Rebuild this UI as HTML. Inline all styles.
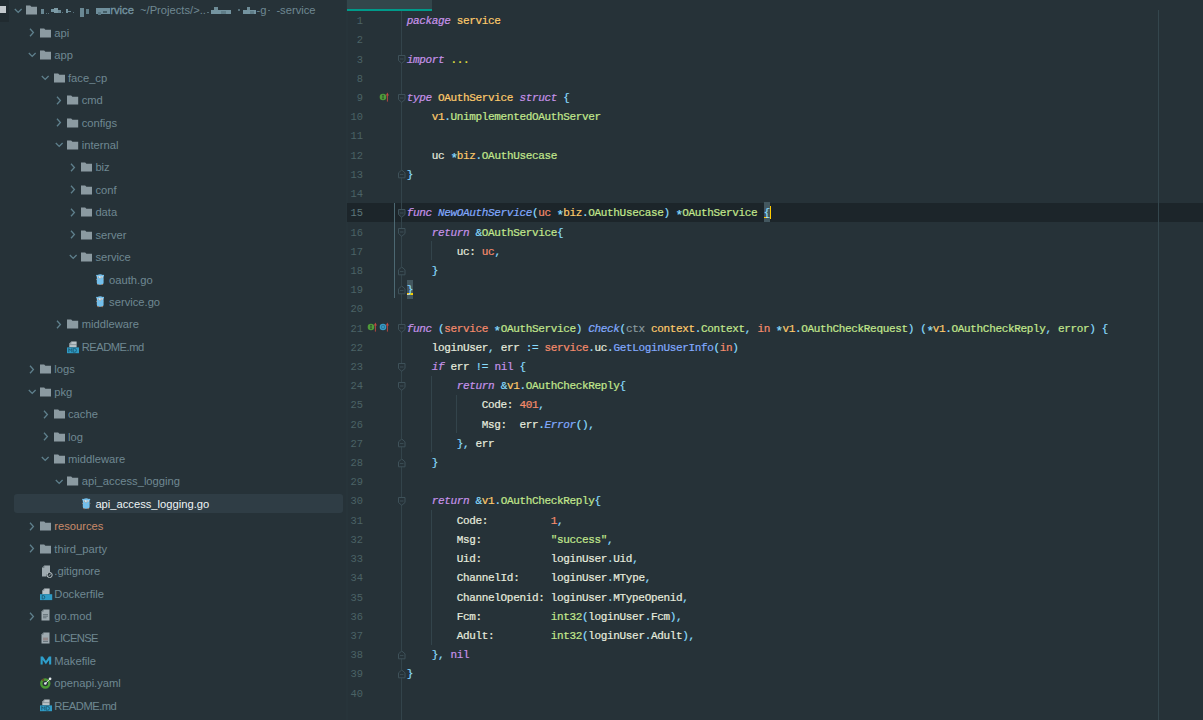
<!DOCTYPE html>
<html><head><meta charset="utf-8"><style>
*{margin:0;padding:0;box-sizing:border-box}
html,body{width:1203px;height:720px;overflow:hidden;background:#263238}
body{position:relative;font-family:"Liberation Sans",sans-serif}
.abs{position:absolute;line-height:0}
.ic,.chev{display:block}
.sbt{position:absolute;white-space:pre;font-size:11.2px;line-height:22.43px;height:22.43px;color:#6f8892}
.sbt.sel{color:#eef4f5}
.sbt.res{color:#c98a6a}
.root b{font-weight:normal;color:#7393a0;-webkit-text-stroke:0.35px}
.blk{position:absolute}
.root .blur{color:#6f8f9c;letter-spacing:-0.5px}
.root .path{color:#7f939c}
.selrow{position:absolute;left:14.2px;width:329px;height:19.4px;border-radius:3px;background:#2f3d45}
#topleft{position:absolute;left:0;top:0;width:9px;height:21.5px;background:#212b30}
#tlf{position:absolute;left:0;top:5.5px;width:6px;height:7.5px;background:#c3c8cc}
#tlf2{position:absolute;left:0;top:5.2px;width:1.8px;height:1px;background:#c3c8cc}
#divider{position:absolute;left:345.8px;top:0;width:2.2px;height:720px;background:#27343a}
#tab{position:absolute;left:347px;top:0;width:85px;height:9.2px;background:#33464b}
#tabline{position:absolute;left:347px;top:9.2px;width:85px;height:2px;background:#009a8a}
.ln{position:absolute;left:406.7px;white-space:pre;font-family:"Liberation Mono",monospace;font-size:11.0px;letter-spacing:-0.340px;line-height:19.21px;height:19.21px;color:#e6ecdf;-webkit-text-stroke:0.2px}
.ast{display:inline-block;transform:translateY(2.6px) scale(1.15)}
.num{position:absolute;left:340px;width:23.0px;text-align:right;font-family:"Liberation Mono",monospace;font-size:10.4px;letter-spacing:0.02px;line-height:19.21px;height:19.21px;color:#4b6366}
.k{color:#c792ea;font-style:italic}
.kn{color:#c792ea}
.y{color:#ffcb6b}
.g{color:#c3e88d}
.c{color:#89ddff}
.w{color:#e6ecdf}
.o{color:#f78c6c}
.b{color:#82aaff}
.bi{color:#82aaff;font-style:italic}
.gr{color:#8a9a9f}
.dots{color:#e6e23e}
.num.cur{color:#5d777b}
#curline{position:absolute;left:347px;width:856px;top:202.70px;height:19.21px;background:#1c252a}
#gutline{position:absolute;left:401.2px;top:11px;width:1px;height:709px;background:#33444b}
#scope{position:absolute;left:393.8px;top:202.70px;width:1.3px;height:95.55px;background:#4c6872}
#margin{position:absolute;left:1158px;top:10px;width:1px;height:710px;background:#34464d}
.guide{position:absolute;width:1px}
#bracebox{position:absolute;left:763.52px;top:202.20px;width:6.26px;height:19.71px;background:#43575f}
#bracebox2{position:absolute;left:406.70px;top:279.54px;width:6.26px;height:19.21px;background:#43575f}
#caret{position:absolute;left:769.78px;top:205.90px;width:1.3px;height:13.4px;background:#ffcc00}
.ul{position:absolute;height:1.2px;background:#ffcc00}
</style></head><body>
<div id="topleft"></div><div id="tlf"></div>
<div class="abs" style="left:14.00px;top:7.54px"><svg class="chev" width="9" height="6" viewBox="0 0 9 6"><path d="M0.8 1L4.2 4.4 7.6 1" fill="none" stroke="#5f808d" stroke-width="1.3"/></svg></div>
<div class="abs" style="left:26.30px;top:5.44px"><svg class="ic" width="11.2" height="10" viewBox="0 0 11.2 10"><path d="M0 0.5h4.2l1.2 1.3H11.2V9.5H0z" fill="#8b9aa1"/></svg></div>
<div class="blk" style="left:41.2px;top:9.3px;width:3.3px;height:4.4px;background:#6a8894"></div>
<div class="blk" style="left:45.5px;top:12.6px;width:1.2px;height:1.2px;background:#55707a"></div>
<div class="blk" style="left:48.3px;top:12.6px;width:1.2px;height:1.2px;background:#55707a"></div>
<div class="blk" style="left:51px;top:8.6px;width:3px;height:3.2px;background:#7494a0"></div>
<div class="blk" style="left:54px;top:8.3px;width:4.2px;height:4.8px;background:#7d9ba6"></div>
<div class="blk" style="left:58.2px;top:10px;width:2.8px;height:3px;background:#6d8b96"></div>
<div class="blk" style="left:61.5px;top:12.3px;width:1.2px;height:1.2px;background:#55707a"></div>
<div class="blk" style="left:65.5px;top:9.2px;width:2.5px;height:3.8px;background:#7494a0"></div>
<div class="blk" style="left:68.2px;top:11px;width:2.8px;height:1.2px;background:#6d8b96"></div>
<div class="blk" style="left:72.5px;top:12.3px;width:1.2px;height:1.2px;background:#55707a"></div>
<div class="blk" style="left:80px;top:7.6px;width:3.6px;height:9.2px;background:#6a8894"></div>
<div class="blk" style="left:86px;top:9px;width:3px;height:4.6px;background:#5f7d88"></div>
<div class="blk" style="left:96px;top:8.2px;width:14px;height:6.3px;background:#6f8f9c"></div>
<div class="blk" style="left:98px;top:11.5px;width:3px;height:3px;background:#5a7884"></div>
<div class="blk" style="left:103px;top:10.5px;width:4px;height:2.5px;background:#445d66"></div>
<div class="blk" style="left:207px;top:11.5px;width:1.5px;height:1.5px;background:#55707a"></div>
<div class="blk" style="left:211px;top:9.5px;width:20px;height:4.8px;background:#7494a0"></div>
<div class="blk" style="left:214px;top:7.4px;width:4px;height:2.2px;background:#6d8b96"></div>
<div class="blk" style="left:221px;top:10.5px;width:5px;height:3.5px;background:#5f7d88"></div>
<div class="blk" style="left:238px;top:9.3px;width:2.2px;height:2.2px;background:#55707a"></div>
<div class="blk" style="left:243px;top:9.5px;width:13px;height:4.8px;background:#7494a0"></div>
<div class="blk" style="left:246.5px;top:7.4px;width:3.5px;height:2.2px;background:#6d8b96"></div>
<div class="blk" style="left:250px;top:11px;width:4px;height:3px;background:#5f7d88"></div>
<div class="blk" style="left:268px;top:9.5px;width:2px;height:1.4px;background:#55707a"></div>
<div class="sbt root" style="left:110.3px;top:-0.96px"><b>rvice</b></div>
<div class="sbt" style="left:140px;top:-0.96px">~/Projects/&gt;..</div>
<div class="sbt" style="left:256.5px;top:-0.96px">-g</div>
<div class="sbt" style="left:276.4px;top:-0.96px">-service</div>
<div class="abs" style="left:29.00px;top:28.47px"><svg class="chev" width="6" height="9" viewBox="0 0 6 9"><path d="M1 0.8L4.4 4.5 1 8.2" fill="none" stroke="#5f808d" stroke-width="1.3"/></svg></div>
<div class="abs" style="left:40.00px;top:27.87px"><svg class="ic" width="11.2" height="10" viewBox="0 0 11.2 10"><path d="M0 0.5h4.2l1.2 1.3H11.2V9.5H0z" fill="#8b9aa1"/></svg></div>
<div class="sbt " style="left:54.30px;top:21.87px">api</div>
<div class="abs" style="left:27.70px;top:52.40px"><svg class="chev" width="9" height="6" viewBox="0 0 9 6"><path d="M0.8 1L4.2 4.4 7.6 1" fill="none" stroke="#5f808d" stroke-width="1.3"/></svg></div>
<div class="abs" style="left:40.00px;top:50.30px"><svg class="ic" width="11.2" height="10" viewBox="0 0 11.2 10"><path d="M0 0.5h4.2l1.2 1.3H11.2V9.5H0z" fill="#8b9aa1"/></svg></div>
<div class="sbt " style="left:54.30px;top:44.30px">app</div>
<div class="abs" style="left:41.40px;top:74.83px"><svg class="chev" width="9" height="6" viewBox="0 0 9 6"><path d="M0.8 1L4.2 4.4 7.6 1" fill="none" stroke="#5f808d" stroke-width="1.3"/></svg></div>
<div class="abs" style="left:53.70px;top:72.73px"><svg class="ic" width="11.2" height="10" viewBox="0 0 11.2 10"><path d="M0 0.5h4.2l1.2 1.3H11.2V9.5H0z" fill="#8b9aa1"/></svg></div>
<div class="sbt " style="left:68.00px;top:66.73px">face_cp</div>
<div class="abs" style="left:56.40px;top:95.76px"><svg class="chev" width="6" height="9" viewBox="0 0 6 9"><path d="M1 0.8L4.4 4.5 1 8.2" fill="none" stroke="#5f808d" stroke-width="1.3"/></svg></div>
<div class="abs" style="left:67.40px;top:95.16px"><svg class="ic" width="11.2" height="10" viewBox="0 0 11.2 10"><path d="M0 0.5h4.2l1.2 1.3H11.2V9.5H0z" fill="#8b9aa1"/></svg></div>
<div class="sbt " style="left:81.70px;top:89.16px">cmd</div>
<div class="abs" style="left:56.40px;top:118.19px"><svg class="chev" width="6" height="9" viewBox="0 0 6 9"><path d="M1 0.8L4.4 4.5 1 8.2" fill="none" stroke="#5f808d" stroke-width="1.3"/></svg></div>
<div class="abs" style="left:67.40px;top:117.59px"><svg class="ic" width="11.2" height="10" viewBox="0 0 11.2 10"><path d="M0 0.5h4.2l1.2 1.3H11.2V9.5H0z" fill="#8b9aa1"/></svg></div>
<div class="sbt " style="left:81.70px;top:111.59px">configs</div>
<div class="abs" style="left:55.10px;top:142.12px"><svg class="chev" width="9" height="6" viewBox="0 0 9 6"><path d="M0.8 1L4.2 4.4 7.6 1" fill="none" stroke="#5f808d" stroke-width="1.3"/></svg></div>
<div class="abs" style="left:67.40px;top:140.02px"><svg class="ic" width="11.2" height="10" viewBox="0 0 11.2 10"><path d="M0 0.5h4.2l1.2 1.3H11.2V9.5H0z" fill="#8b9aa1"/></svg></div>
<div class="sbt " style="left:81.70px;top:134.02px">internal</div>
<div class="abs" style="left:70.10px;top:163.05px"><svg class="chev" width="6" height="9" viewBox="0 0 6 9"><path d="M1 0.8L4.4 4.5 1 8.2" fill="none" stroke="#5f808d" stroke-width="1.3"/></svg></div>
<div class="abs" style="left:81.10px;top:162.45px"><svg class="ic" width="11.2" height="10" viewBox="0 0 11.2 10"><path d="M0 0.5h4.2l1.2 1.3H11.2V9.5H0z" fill="#8b9aa1"/></svg></div>
<div class="sbt " style="left:95.40px;top:156.45px">biz</div>
<div class="abs" style="left:70.10px;top:185.48px"><svg class="chev" width="6" height="9" viewBox="0 0 6 9"><path d="M1 0.8L4.4 4.5 1 8.2" fill="none" stroke="#5f808d" stroke-width="1.3"/></svg></div>
<div class="abs" style="left:81.10px;top:184.88px"><svg class="ic" width="11.2" height="10" viewBox="0 0 11.2 10"><path d="M0 0.5h4.2l1.2 1.3H11.2V9.5H0z" fill="#8b9aa1"/></svg></div>
<div class="sbt " style="left:95.40px;top:178.88px">conf</div>
<div class="abs" style="left:70.10px;top:207.91px"><svg class="chev" width="6" height="9" viewBox="0 0 6 9"><path d="M1 0.8L4.4 4.5 1 8.2" fill="none" stroke="#5f808d" stroke-width="1.3"/></svg></div>
<div class="abs" style="left:81.10px;top:207.31px"><svg class="ic" width="11.2" height="10" viewBox="0 0 11.2 10"><path d="M0 0.5h4.2l1.2 1.3H11.2V9.5H0z" fill="#8b9aa1"/></svg></div>
<div class="sbt " style="left:95.40px;top:201.31px">data</div>
<div class="abs" style="left:70.10px;top:230.34px"><svg class="chev" width="6" height="9" viewBox="0 0 6 9"><path d="M1 0.8L4.4 4.5 1 8.2" fill="none" stroke="#5f808d" stroke-width="1.3"/></svg></div>
<div class="abs" style="left:81.10px;top:229.74px"><svg class="ic" width="11.2" height="10" viewBox="0 0 11.2 10"><path d="M0 0.5h4.2l1.2 1.3H11.2V9.5H0z" fill="#8b9aa1"/></svg></div>
<div class="sbt " style="left:95.40px;top:223.74px">server</div>
<div class="abs" style="left:68.80px;top:254.27px"><svg class="chev" width="9" height="6" viewBox="0 0 9 6"><path d="M0.8 1L4.2 4.4 7.6 1" fill="none" stroke="#5f808d" stroke-width="1.3"/></svg></div>
<div class="abs" style="left:81.10px;top:252.17px"><svg class="ic" width="11.2" height="10" viewBox="0 0 11.2 10"><path d="M0 0.5h4.2l1.2 1.3H11.2V9.5H0z" fill="#8b9aa1"/></svg></div>
<div class="sbt " style="left:95.40px;top:246.17px">service</div>
<div class="abs" style="left:95.90px;top:274.00px"><svg class="ic" width="8.4" height="11.4" viewBox="0 0 84 114"><path d="M14 9Q42 -3 70 9Q82 6 83 17Q82 24 76 26V88Q76 106 58 108H26Q8 106 8 88V26Q2 24 1 17Q2 6 14 9z" fill="#74bfeb"/><ellipse cx="28" cy="30" rx="13" ry="11" fill="#e9f3f8"/><ellipse cx="56" cy="30" rx="13" ry="11" fill="#e9f3f8"/><circle cx="26" cy="31" r="5" fill="#5d4c44"/><circle cx="58" cy="31" r="5" fill="#5d4c44"/><ellipse cx="42" cy="45" rx="8" ry="5" fill="#b9aea6"/><circle cx="4" cy="56" r="5" fill="#a88a78"/><circle cx="80" cy="56" r="5" fill="#a88a78"/><ellipse cx="22" cy="106" rx="8" ry="6" fill="#a87858"/><ellipse cx="62" cy="106" rx="8" ry="6" fill="#a87858"/></svg></div>
<div class="sbt " style="left:109.10px;top:268.60px">oauth.go</div>
<div class="abs" style="left:95.90px;top:296.43px"><svg class="ic" width="8.4" height="11.4" viewBox="0 0 84 114"><path d="M14 9Q42 -3 70 9Q82 6 83 17Q82 24 76 26V88Q76 106 58 108H26Q8 106 8 88V26Q2 24 1 17Q2 6 14 9z" fill="#74bfeb"/><ellipse cx="28" cy="30" rx="13" ry="11" fill="#e9f3f8"/><ellipse cx="56" cy="30" rx="13" ry="11" fill="#e9f3f8"/><circle cx="26" cy="31" r="5" fill="#5d4c44"/><circle cx="58" cy="31" r="5" fill="#5d4c44"/><ellipse cx="42" cy="45" rx="8" ry="5" fill="#b9aea6"/><circle cx="4" cy="56" r="5" fill="#a88a78"/><circle cx="80" cy="56" r="5" fill="#a88a78"/><ellipse cx="22" cy="106" rx="8" ry="6" fill="#a87858"/><ellipse cx="62" cy="106" rx="8" ry="6" fill="#a87858"/></svg></div>
<div class="sbt " style="left:109.10px;top:291.03px">service.go</div>
<div class="abs" style="left:56.40px;top:320.06px"><svg class="chev" width="6" height="9" viewBox="0 0 6 9"><path d="M1 0.8L4.4 4.5 1 8.2" fill="none" stroke="#5f808d" stroke-width="1.3"/></svg></div>
<div class="abs" style="left:67.40px;top:319.46px"><svg class="ic" width="11.2" height="10" viewBox="0 0 11.2 10"><path d="M0 0.5h4.2l1.2 1.3H11.2V9.5H0z" fill="#8b9aa1"/></svg></div>
<div class="sbt " style="left:81.70px;top:313.46px">middleware</div>
<div class="abs" style="left:67.10px;top:340.59px"><svg class="ic" width="13" height="13" viewBox="0 0 13 13"><path d="M4.3 0.5H9.6V6.2H2.3V2.5z" fill="#b9c2c6"/><path d="M2.3 2.5L4.3 0.5V2.5z" fill="#6c7a80"/><path d="M2.3 3.6H9.6" stroke="#5e6c72" stroke-width="0.5"/><rect x="0" y="6.4" width="12" height="5.8" fill="#2f9bc5"/><path d="M1.8 11.2V7.6L3.3 9.4 4.8 7.6V11.2M6.2 7.6V11.2H7.8Q9.4 11.2 9.4 9.4Q9.4 7.6 7.8 7.6H6.2" fill="none" stroke="#1d5a73" stroke-width="0.9"/></svg></div>
<div class="sbt " style="left:81.70px;top:335.89px;letter-spacing:-0.5px">README.md</div>
<div class="abs" style="left:29.00px;top:364.92px"><svg class="chev" width="6" height="9" viewBox="0 0 6 9"><path d="M1 0.8L4.4 4.5 1 8.2" fill="none" stroke="#5f808d" stroke-width="1.3"/></svg></div>
<div class="abs" style="left:40.00px;top:364.32px"><svg class="ic" width="11.2" height="10" viewBox="0 0 11.2 10"><path d="M0 0.5h4.2l1.2 1.3H11.2V9.5H0z" fill="#8b9aa1"/></svg></div>
<div class="sbt " style="left:54.30px;top:358.32px">logs</div>
<div class="abs" style="left:27.70px;top:388.85px"><svg class="chev" width="9" height="6" viewBox="0 0 9 6"><path d="M0.8 1L4.2 4.4 7.6 1" fill="none" stroke="#5f808d" stroke-width="1.3"/></svg></div>
<div class="abs" style="left:40.00px;top:386.75px"><svg class="ic" width="11.2" height="10" viewBox="0 0 11.2 10"><path d="M0 0.5h4.2l1.2 1.3H11.2V9.5H0z" fill="#8b9aa1"/></svg></div>
<div class="sbt " style="left:54.30px;top:380.75px">pkg</div>
<div class="abs" style="left:42.70px;top:409.78px"><svg class="chev" width="6" height="9" viewBox="0 0 6 9"><path d="M1 0.8L4.4 4.5 1 8.2" fill="none" stroke="#5f808d" stroke-width="1.3"/></svg></div>
<div class="abs" style="left:53.70px;top:409.18px"><svg class="ic" width="11.2" height="10" viewBox="0 0 11.2 10"><path d="M0 0.5h4.2l1.2 1.3H11.2V9.5H0z" fill="#8b9aa1"/></svg></div>
<div class="sbt " style="left:68.00px;top:403.18px">cache</div>
<div class="abs" style="left:42.70px;top:432.21px"><svg class="chev" width="6" height="9" viewBox="0 0 6 9"><path d="M1 0.8L4.4 4.5 1 8.2" fill="none" stroke="#5f808d" stroke-width="1.3"/></svg></div>
<div class="abs" style="left:53.70px;top:431.61px"><svg class="ic" width="11.2" height="10" viewBox="0 0 11.2 10"><path d="M0 0.5h4.2l1.2 1.3H11.2V9.5H0z" fill="#8b9aa1"/></svg></div>
<div class="sbt " style="left:68.00px;top:425.61px">log</div>
<div class="abs" style="left:41.40px;top:456.14px"><svg class="chev" width="9" height="6" viewBox="0 0 9 6"><path d="M0.8 1L4.2 4.4 7.6 1" fill="none" stroke="#5f808d" stroke-width="1.3"/></svg></div>
<div class="abs" style="left:53.70px;top:454.04px"><svg class="ic" width="11.2" height="10" viewBox="0 0 11.2 10"><path d="M0 0.5h4.2l1.2 1.3H11.2V9.5H0z" fill="#8b9aa1"/></svg></div>
<div class="sbt " style="left:68.00px;top:448.04px">middleware</div>
<div class="abs" style="left:55.10px;top:478.57px"><svg class="chev" width="9" height="6" viewBox="0 0 9 6"><path d="M0.8 1L4.2 4.4 7.6 1" fill="none" stroke="#5f808d" stroke-width="1.3"/></svg></div>
<div class="abs" style="left:67.40px;top:476.47px"><svg class="ic" width="11.2" height="10" viewBox="0 0 11.2 10"><path d="M0 0.5h4.2l1.2 1.3H11.2V9.5H0z" fill="#8b9aa1"/></svg></div>
<div class="sbt " style="left:81.70px;top:470.47px">api_access_logging</div>
<div class="selrow" style="top:494.01px"></div>
<div class="abs" style="left:82.20px;top:498.30px"><svg class="ic" width="8.4" height="11.4" viewBox="0 0 84 114"><path d="M14 9Q42 -3 70 9Q82 6 83 17Q82 24 76 26V88Q76 106 58 108H26Q8 106 8 88V26Q2 24 1 17Q2 6 14 9z" fill="#74bfeb"/><ellipse cx="28" cy="30" rx="13" ry="11" fill="#e9f3f8"/><ellipse cx="56" cy="30" rx="13" ry="11" fill="#e9f3f8"/><circle cx="26" cy="31" r="5" fill="#5d4c44"/><circle cx="58" cy="31" r="5" fill="#5d4c44"/><ellipse cx="42" cy="45" rx="8" ry="5" fill="#b9aea6"/><circle cx="4" cy="56" r="5" fill="#a88a78"/><circle cx="80" cy="56" r="5" fill="#a88a78"/><ellipse cx="22" cy="106" rx="8" ry="6" fill="#a87858"/><ellipse cx="62" cy="106" rx="8" ry="6" fill="#a87858"/></svg></div>
<div class="sbt sel" style="left:95.40px;top:492.90px">api_access_logging.go</div>
<div class="abs" style="left:29.00px;top:521.93px"><svg class="chev" width="6" height="9" viewBox="0 0 6 9"><path d="M1 0.8L4.4 4.5 1 8.2" fill="none" stroke="#5f808d" stroke-width="1.3"/></svg></div>
<div class="abs" style="left:40.00px;top:521.33px"><svg class="ic" width="11.2" height="10" viewBox="0 0 11.2 10"><path d="M0 0.5h4.2l1.2 1.3H11.2V9.5H0z" fill="#8b9aa1"/></svg></div>
<div class="sbt res" style="left:54.30px;top:515.33px">resources</div>
<div class="abs" style="left:29.00px;top:544.36px"><svg class="chev" width="6" height="9" viewBox="0 0 6 9"><path d="M1 0.8L4.4 4.5 1 8.2" fill="none" stroke="#5f808d" stroke-width="1.3"/></svg></div>
<div class="abs" style="left:40.00px;top:543.76px"><svg class="ic" width="11.2" height="10" viewBox="0 0 11.2 10"><path d="M0 0.5h4.2l1.2 1.3H11.2V9.5H0z" fill="#8b9aa1"/></svg></div>
<div class="sbt " style="left:54.30px;top:537.76px">third_party</div>
<div class="abs" style="left:40.80px;top:565.29px"><svg class="ic" width="12" height="13" viewBox="0 0 12 13"><path d="M3.3 0.5H9V7.2A3.2 3.2 0 0 0 5.6 11.5H1V2.8z" fill="#9eaab0"/><path d="M1 2.8L3.3 0.5V2.8z" fill="#5f6d73"/><circle cx="8.6" cy="10" r="2.6" fill="#263238" stroke="#b9c2c6" stroke-width="1"/><path d="M7.5 11L9.8 8.9" stroke="#b9c2c6" stroke-width="0.8"/></svg></div>
<div class="sbt " style="left:54.30px;top:560.19px">.gitignore</div>
<div class="abs" style="left:39.70px;top:587.52px"><svg class="ic" width="13" height="13" viewBox="0 0 13 13"><path d="M4.3 0.5H9.6V6.2H2.3V2.5z" fill="#b9c2c6"/><path d="M2.3 2.5L4.3 0.5V2.5z" fill="#6c7a80"/><rect x="0" y="6.2" width="12.2" height="5.9" fill="#2f9bc5"/><path d="M2.2 7.5V10.9H3.3Q4.8 10.9 4.8 9.2Q4.8 7.5 3.3 7.5z" fill="none" stroke="#1d5a73" stroke-width="0.9"/></svg></div>
<div class="sbt " style="left:54.30px;top:582.62px">Dockerfile</div>
<div class="abs" style="left:29.00px;top:611.65px"><svg class="chev" width="6" height="9" viewBox="0 0 6 9"><path d="M1 0.8L4.4 4.5 1 8.2" fill="none" stroke="#5f808d" stroke-width="1.3"/></svg></div>
<div class="abs" style="left:40.00px;top:609.45px"><svg class="ic" width="12" height="13" viewBox="0 0 12 13"><path d="M3.5 0.5H9.5V11.6H1.5V2.5z" fill="#9eaab0"/><path d="M1.5 2.5L3.5 0.5V2.5z" fill="#5f6d73"/><path d="M3 5.6h5M3 7.2h5M3 8.8h3.5" stroke="#55636a" stroke-width="0.8"/></svg></div>
<div class="sbt " style="left:54.30px;top:605.05px">go.mod</div>
<div class="abs" style="left:40.00px;top:631.98px"><svg class="ic" width="12" height="13" viewBox="0 0 12 13"><path d="M3.5 0.5H9.5V11.6H1.5V2.5z" fill="#9eaab0"/><path d="M1.5 2.5L3.5 0.5V2.5z" fill="#5f6d73"/><path d="M3 6.2h5M3 7.8h5" stroke="#8a6e6a" stroke-width="0.8"/><path d="M3 9.4h5" stroke="#55636a" stroke-width="0.8"/></svg></div>
<div class="sbt " style="left:54.30px;top:627.48px;letter-spacing:-0.6px">LICENSE</div>
<div class="abs" style="left:39.80px;top:656.21px"><svg class="ic" width="12" height="12" viewBox="0 0 12 12"><path d="M0.6 8.6V0.6h2.3L5.9 4.9 8.9 0.6h2.3v8H9.1V3.9L5.9 8.2 2.7 3.9v4.7z" fill="#2e9fcb"/></svg></div>
<div class="sbt " style="left:54.30px;top:649.91px">Makefile</div>
<div class="abs" style="left:39.90px;top:677.04px"><svg class="ic" width="12" height="12" viewBox="0 0 12 12"><circle cx="5.3" cy="6.5" r="4" fill="none" stroke="#4c9a35" stroke-width="2.4"/><path d="M2.2 3.4A4 4 0 0 1 4 2.7" stroke="#6a4a2a" stroke-width="2.2" fill="none"/><path d="M5.3 6.5L10.3 1.6" stroke="#e2e8ea" stroke-width="1"/><circle cx="5.3" cy="6.5" r="1.3" fill="#e2e8ea"/><circle cx="10.1" cy="1.8" r="1.35" fill="#e2e8ea"/></svg></div>
<div class="sbt " style="left:54.30px;top:672.34px">openapi.yaml</div>
<div class="abs" style="left:39.70px;top:699.47px"><svg class="ic" width="13" height="13" viewBox="0 0 13 13"><path d="M4.3 0.5H9.6V6.2H2.3V2.5z" fill="#b9c2c6"/><path d="M2.3 2.5L4.3 0.5V2.5z" fill="#6c7a80"/><path d="M2.3 3.6H9.6" stroke="#5e6c72" stroke-width="0.5"/><rect x="0" y="6.4" width="12" height="5.8" fill="#2f9bc5"/><path d="M1.8 11.2V7.6L3.3 9.4 4.8 7.6V11.2M6.2 7.6V11.2H7.8Q9.4 11.2 9.4 9.4Q9.4 7.6 7.8 7.6H6.2" fill="none" stroke="#1d5a73" stroke-width="0.9"/></svg></div>
<div class="sbt " style="left:54.30px;top:694.77px;letter-spacing:-0.5px">README.md</div>
<div id="divider"></div>
<div id="curline"></div>
<div id="tab"></div><div id="tabline"></div>
<div id="margin"></div>
<div id="gutline"></div>
<div id="scope"></div>
<div class="guide" style="left:430.74px;top:241.12px;height:19.21px;background:#33444b"></div>
<div class="guide" style="left:430.74px;top:375.59px;height:76.84px;background:#33444b"></div>
<div class="guide" style="left:455.78px;top:394.80px;height:38.42px;background:#33444b"></div>
<div class="guide" style="left:430.74px;top:510.06px;height:134.47px;background:#33444b"></div>
<div id="bracebox"></div>
<div id="bracebox2"></div>
<div class="ul" style="left:763.52px;top:217.30px;width:4px"></div>
<div class="ul" style="left:406.50px;top:293.34px;width:6.2px;height:1.5px"></div>
<svg class="abs" style="left:397.8px;top:55.22px" width="8" height="9" viewBox="0 0 8 9"><path d="M0.5 0.5h6.5v5l-3.25 2.8-3.25-2.8z" fill="#263238" stroke="#3e5159" stroke-width="1"/><path d="M2 4h3.5" stroke="#3e5159" stroke-width="0.9"/></svg>
<svg class="abs" style="left:397.8px;top:93.64px" width="8" height="9" viewBox="0 0 8 9"><path d="M0.5 0.5h6.5v5l-3.25 2.8-3.25-2.8z" fill="#263238" stroke="#3e5159" stroke-width="1"/><path d="M2 4h3.5" stroke="#3e5159" stroke-width="0.9"/></svg>
<svg class="abs" style="left:397.8px;top:170.48px" width="8" height="9" viewBox="0 0 8 9"><path d="M0.5 7.8h6.5v-5l-3.25-2.8-3.25 2.8z" fill="#263238" stroke="#3e5159" stroke-width="1"/><path d="M2 4.6h3.5" stroke="#3e5159" stroke-width="0.9"/></svg>
<svg class="abs" style="left:397.8px;top:208.90px" width="8" height="9" viewBox="0 0 8 9"><path d="M0.5 0.5h6.5v5l-3.25 2.8-3.25-2.8z" fill="#263238" stroke="#3e5159" stroke-width="1"/><path d="M2 4h3.5" stroke="#3e5159" stroke-width="0.9"/></svg>
<svg class="abs" style="left:397.8px;top:228.11px" width="8" height="9" viewBox="0 0 8 9"><path d="M0.5 0.5h6.5v5l-3.25 2.8-3.25-2.8z" fill="#263238" stroke="#3e5159" stroke-width="1"/><path d="M2 4h3.5" stroke="#3e5159" stroke-width="0.9"/></svg>
<svg class="abs" style="left:397.8px;top:266.53px" width="8" height="9" viewBox="0 0 8 9"><path d="M0.5 7.8h6.5v-5l-3.25-2.8-3.25 2.8z" fill="#263238" stroke="#3e5159" stroke-width="1"/><path d="M2 4.6h3.5" stroke="#3e5159" stroke-width="0.9"/></svg>
<svg class="abs" style="left:397.8px;top:285.74px" width="8" height="9" viewBox="0 0 8 9"><path d="M0.5 7.8h6.5v-5l-3.25-2.8-3.25 2.8z" fill="#263238" stroke="#3e5159" stroke-width="1"/><path d="M2 4.6h3.5" stroke="#3e5159" stroke-width="0.9"/></svg>
<svg class="abs" style="left:397.8px;top:324.16px" width="8" height="9" viewBox="0 0 8 9"><path d="M0.5 0.5h6.5v5l-3.25 2.8-3.25-2.8z" fill="#263238" stroke="#3e5159" stroke-width="1"/><path d="M2 4h3.5" stroke="#3e5159" stroke-width="0.9"/></svg>
<svg class="abs" style="left:397.8px;top:362.58px" width="8" height="9" viewBox="0 0 8 9"><path d="M0.5 0.5h6.5v5l-3.25 2.8-3.25-2.8z" fill="#263238" stroke="#3e5159" stroke-width="1"/><path d="M2 4h3.5" stroke="#3e5159" stroke-width="0.9"/></svg>
<svg class="abs" style="left:397.8px;top:381.79px" width="8" height="9" viewBox="0 0 8 9"><path d="M0.5 0.5h6.5v5l-3.25 2.8-3.25-2.8z" fill="#263238" stroke="#3e5159" stroke-width="1"/><path d="M2 4h3.5" stroke="#3e5159" stroke-width="0.9"/></svg>
<svg class="abs" style="left:397.8px;top:439.42px" width="8" height="9" viewBox="0 0 8 9"><path d="M0.5 7.8h6.5v-5l-3.25-2.8-3.25 2.8z" fill="#263238" stroke="#3e5159" stroke-width="1"/><path d="M2 4.6h3.5" stroke="#3e5159" stroke-width="0.9"/></svg>
<svg class="abs" style="left:397.8px;top:458.63px" width="8" height="9" viewBox="0 0 8 9"><path d="M0.5 7.8h6.5v-5l-3.25-2.8-3.25 2.8z" fill="#263238" stroke="#3e5159" stroke-width="1"/><path d="M2 4.6h3.5" stroke="#3e5159" stroke-width="0.9"/></svg>
<svg class="abs" style="left:397.8px;top:497.05px" width="8" height="9" viewBox="0 0 8 9"><path d="M0.5 0.5h6.5v5l-3.25 2.8-3.25-2.8z" fill="#263238" stroke="#3e5159" stroke-width="1"/><path d="M2 4h3.5" stroke="#3e5159" stroke-width="0.9"/></svg>
<svg class="abs" style="left:397.8px;top:650.73px" width="8" height="9" viewBox="0 0 8 9"><path d="M0.5 7.8h6.5v-5l-3.25-2.8-3.25 2.8z" fill="#263238" stroke="#3e5159" stroke-width="1"/><path d="M2 4.6h3.5" stroke="#3e5159" stroke-width="0.9"/></svg>
<svg class="abs" style="left:397.8px;top:669.94px" width="8" height="9" viewBox="0 0 8 9"><path d="M0.5 7.8h6.5v-5l-3.25-2.8-3.25 2.8z" fill="#263238" stroke="#3e5159" stroke-width="1"/><path d="M2 4.6h3.5" stroke="#3e5159" stroke-width="0.9"/></svg>
<svg class="abs" style="left:379.30px;top:90.94px" width="12" height="12" viewBox="0 0 12 12"><circle cx="4" cy="6" r="3.3" fill="#4f9a3a"/><path d="M3.4 4.4h1.2M4 4.4v3.2M3.4 7.6h1.2" stroke="#24302a" stroke-width="0.8"/><path d="M8.4 10.6V3.6" stroke="#c24a42" stroke-width="0.9"/><path d="M6.9 4.6L8.4 1.6 9.9 4.6z" fill="#c24a42"/></svg>
<svg class="abs" style="left:367.20px;top:321.46px" width="12" height="12" viewBox="0 0 12 12"><circle cx="4" cy="6" r="3.3" fill="#4f9a3a"/><path d="M3.4 4.4h1.2M4 4.4v3.2M3.4 7.6h1.2" stroke="#24302a" stroke-width="0.8"/><path d="M8.4 10.6V3.6" stroke="#c24a42" stroke-width="0.9"/><path d="M6.9 4.6L8.4 1.6 9.9 4.6z" fill="#c24a42"/></svg>
<svg class="abs" style="left:379.30px;top:321.46px" width="12" height="12" viewBox="0 0 12 12"><circle cx="4" cy="6" r="3.3" fill="#3799c4"/><circle cx="4" cy="6" r="2" fill="#2b6f8e"/><rect x="3.2" y="5.2" width="1.6" height="1.6" fill="none" stroke="#3aa2cf" stroke-width="0.6"/><path d="M8.4 10.6V3.6" stroke="#c24a42" stroke-width="0.9"/><path d="M6.9 4.6L8.4 1.6 9.9 4.6z" fill="#c24a42"/></svg>
<div class="num" style="top:12.20px">1</div>
<div class="num" style="top:31.41px">2</div>
<div class="num" style="top:50.62px">3</div>
<div class="num" style="top:69.83px">8</div>
<div class="num" style="top:89.04px">9</div>
<div class="num" style="top:108.25px">10</div>
<div class="num" style="top:127.46px">11</div>
<div class="num" style="top:146.67px">12</div>
<div class="num" style="top:165.88px">13</div>
<div class="num" style="top:185.09px">14</div>
<div class="num cur" style="top:204.30px">15</div>
<div class="num" style="top:223.51px">16</div>
<div class="num" style="top:242.72px">17</div>
<div class="num" style="top:261.93px">18</div>
<div class="num" style="top:281.14px">19</div>
<div class="num" style="top:300.35px">20</div>
<div class="num" style="top:319.56px">21</div>
<div class="num" style="top:338.77px">22</div>
<div class="num" style="top:357.98px">23</div>
<div class="num" style="top:377.19px">24</div>
<div class="num" style="top:396.40px">25</div>
<div class="num" style="top:415.61px">26</div>
<div class="num" style="top:434.82px">27</div>
<div class="num" style="top:454.03px">28</div>
<div class="num" style="top:473.24px">29</div>
<div class="num" style="top:492.45px">30</div>
<div class="num" style="top:511.66px">31</div>
<div class="num" style="top:530.87px">32</div>
<div class="num" style="top:550.08px">33</div>
<div class="num" style="top:569.29px">34</div>
<div class="num" style="top:588.50px">35</div>
<div class="num" style="top:607.71px">36</div>
<div class="num" style="top:626.92px">37</div>
<div class="num" style="top:646.13px">38</div>
<div class="num" style="top:665.34px">39</div>
<div class="num" style="top:684.55px">40</div>
<div class="ln" style="top:12.20px"><span class="k">package</span> <span class="y">service</span></div>
<div class="ln" style="top:31.41px"></div>
<div class="ln" style="top:50.62px"><span class="k">import</span> <span class="dots">...</span></div>
<div class="ln" style="top:69.83px"></div>
<div class="ln" style="top:89.04px"><span class="k">type</span> <span class="y">OAuthService</span> <span class="k">struct</span> <span class="c">{</span></div>
<div class="ln" style="top:108.25px">    <span class="y">v1</span><span class="c">.</span><span class="g">UnimplementedOAuthServer</span></div>
<div class="ln" style="top:127.46px"></div>
<div class="ln" style="top:146.67px">    <span class="w">uc</span> <span class="c ast">*</span><span class="y">biz</span><span class="c">.</span><span class="g">OAuthUsecase</span></div>
<div class="ln" style="top:165.88px"><span class="c">}</span></div>
<div class="ln" style="top:185.09px"></div>
<div class="ln" style="top:204.30px"><span class="k">func</span> <span class="bi">NewOAuthService</span><span class="c">(</span><span class="o">uc</span> <span class="c ast">*</span><span class="y">biz</span><span class="c">.</span><span class="g">OAuthUsecase</span><span class="c">)</span> <span class="c ast">*</span><span class="g">OAuthService</span> <span class="c">{</span></div>
<div class="ln" style="top:223.51px">    <span class="k">return</span> <span class="c">&amp;</span><span class="g">OAuthService</span><span class="c">{</span></div>
<div class="ln" style="top:242.72px">        <span class="w">uc:</span> <span class="o">uc</span><span class="c">,</span></div>
<div class="ln" style="top:261.93px">    <span class="c">}</span></div>
<div class="ln" style="top:281.14px"><span class="c">}</span></div>
<div class="ln" style="top:300.35px"></div>
<div class="ln" style="top:319.56px"><span class="k">func</span> <span class="c">(</span><span class="o">service</span> <span class="c ast">*</span><span class="g">OAuthService</span><span class="c">)</span> <span class="bi">Check</span><span class="c">(</span><span class="gr">ctx</span> <span class="y">context</span><span class="c">.</span><span class="g">Context</span><span class="c">,</span> <span class="o">in</span> <span class="c ast">*</span><span class="y">v1</span><span class="c">.</span><span class="g">OAuthCheckRequest</span><span class="c">)</span> <span class="c">(</span><span class="c ast">*</span><span class="y">v1</span><span class="c">.</span><span class="g">OAuthCheckReply</span><span class="c">,</span> <span class="g">error</span><span class="c">)</span> <span class="c">{</span></div>
<div class="ln" style="top:338.77px">    <span class="w">loginUser</span><span class="c">,</span> <span class="w">err</span> <span class="c">:=</span> <span class="o">service</span><span class="c">.</span><span class="w">uc</span><span class="c">.</span><span class="b">GetLoginUserInfo</span><span class="c">(</span><span class="o">in</span><span class="c">)</span></div>
<div class="ln" style="top:357.98px">    <span class="k">if</span> <span class="w">err</span> <span class="c">!=</span> <span class="kn">nil</span> <span class="c">{</span></div>
<div class="ln" style="top:377.19px">        <span class="k">return</span> <span class="c">&amp;</span><span class="y">v1</span><span class="c">.</span><span class="g">OAuthCheckReply</span><span class="c">{</span></div>
<div class="ln" style="top:396.40px">            <span class="w">Code:</span> <span class="o">401</span><span class="c">,</span></div>
<div class="ln" style="top:415.61px">            <span class="w">Msg:</span>  <span class="w">err</span><span class="c">.</span><span class="bi">Error</span><span class="c">()</span><span class="c">,</span></div>
<div class="ln" style="top:434.82px">        <span class="c">},</span> <span class="w">err</span></div>
<div class="ln" style="top:454.03px">    <span class="c">}</span></div>
<div class="ln" style="top:473.24px"></div>
<div class="ln" style="top:492.45px">    <span class="k">return</span> <span class="c">&amp;</span><span class="y">v1</span><span class="c">.</span><span class="g">OAuthCheckReply</span><span class="c">{</span></div>
<div class="ln" style="top:511.66px">        <span class="w">Code:</span>          <span class="o">1</span><span class="c">,</span></div>
<div class="ln" style="top:530.87px">        <span class="w">Msg:</span>           <span class="g">"success"</span><span class="c">,</span></div>
<div class="ln" style="top:550.08px">        <span class="w">Uid:</span>           <span class="w">loginUser</span><span class="c">.</span><span class="w">Uid</span><span class="c">,</span></div>
<div class="ln" style="top:569.29px">        <span class="w">ChannelId:</span>     <span class="w">loginUser</span><span class="c">.</span><span class="w">MType</span><span class="c">,</span></div>
<div class="ln" style="top:588.50px">        <span class="w">ChannelOpenid:</span> <span class="w">loginUser</span><span class="c">.</span><span class="w">MTypeOpenid</span><span class="c">,</span></div>
<div class="ln" style="top:607.71px">        <span class="w">Fcm:</span>           <span class="g">int32</span><span class="c">(</span><span class="w">loginUser</span><span class="c">.</span><span class="w">Fcm</span><span class="c">),</span></div>
<div class="ln" style="top:626.92px">        <span class="w">Adult:</span>         <span class="g">int32</span><span class="c">(</span><span class="w">loginUser</span><span class="c">.</span><span class="w">Adult</span><span class="c">),</span></div>
<div class="ln" style="top:646.13px">    <span class="c">},</span> <span class="kn">nil</span></div>
<div class="ln" style="top:665.34px"><span class="c">}</span></div>
<div class="ln" style="top:684.55px"></div>
<div id="caret"></div>
</body></html>
